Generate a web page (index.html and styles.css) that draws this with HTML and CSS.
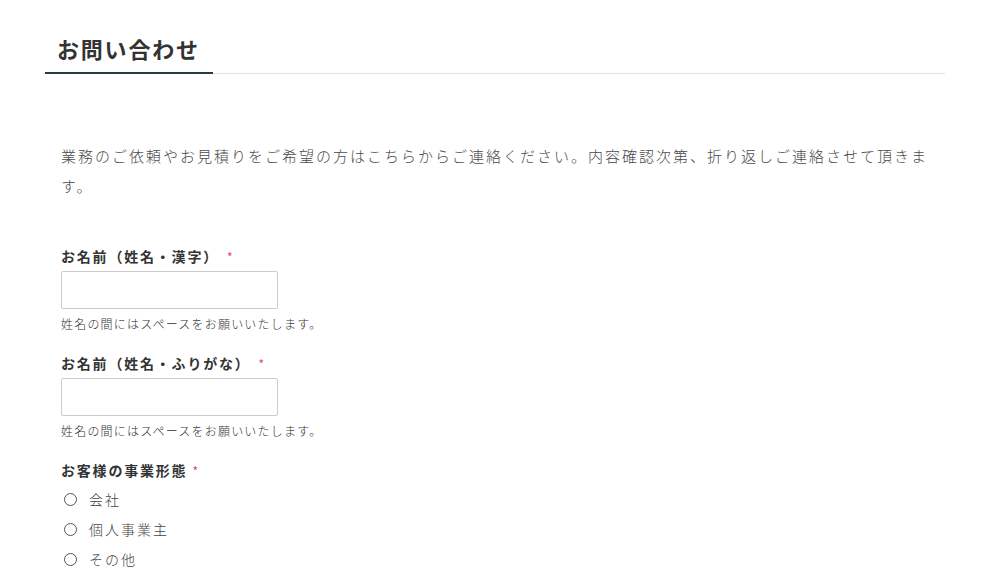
FILE: index.html
```html
<!DOCTYPE html>
<html lang="ja">
<head>
    <meta charset="utf-8">
    <meta name="viewport" content="width=device-width, initial-scale=1">
    <title>お問い合わせ</title>
    <link rel="stylesheet" href="styles.css">
</head>
<body>
<div class="page">
    <div class="page-head">
        <h2 class="page-title">お問い合わせ</h2>
    </div>
    <div class="content">
        <p class="lead">業務のご依頼やお見積りをご希望の方はこちらからご連絡ください。内容確認次第、折り返しご連絡させて頂きます。</p>
        <form class="form">
            <div class="field">
                <label class="field-label" for="name-kanji">お名前（姓名・漢字）<span class="req req-gap">*</span></label>
                <input class="text-input" id="name-kanji" type="text">
                <div class="help">姓名の間にはスペースをお願いいたします。</div>
            </div>
            <div class="field">
                <label class="field-label" for="name-kana">お名前（姓名・ふりがな）<span class="req req-gap">*</span></label>
                <input class="text-input" id="name-kana" type="text">
                <div class="help">姓名の間にはスペースをお願いいたします。</div>
            </div>
            <div class="field">
                <div class="field-label">お客様の事業形態 <span class="req">*</span></div>
                <label class="radio"><span class="radio-mark"></span>会社</label>
                <label class="radio"><span class="radio-mark"></span>個人事業主</label>
                <label class="radio"><span class="radio-mark"></span>その他</label>
            </div>
        </form>
    </div>
</div>
</body>
</html>
```

FILE: styles.css
```css
body {
    margin: 0;
    background: #ffffff;
    color: #555555;
    font-family: "Noto Sans CJK JP", "Noto Sans", sans-serif;
}

.page {
    width: 900px;
    margin-left: 45px;
    padding-top: 32px;
}

.page-head {
    border-bottom: 1px solid #e3e3e3;
}

.page-title {
    display: inline-block;
    margin: 0 0 -1px 0;
    padding: 0 12px 8px 12px;
    width: 144px;
    font-size: 22px;
    line-height: 32px;
    font-weight: bold;
    color: #333333;
    letter-spacing: 1.8px;
    white-space: nowrap;
    border-bottom: 2px solid #2b3a40;
}

.content {
    padding: 0 16px;
}

.lead {
    margin: 67px 0 0 0;
    font-size: 15px;
    line-height: 30px;
    letter-spacing: 2px;
    font-weight: 300;
    color: #4a4a4a;
}

.form {
    margin-top: 45px;
}

.field {
    display: flex;
    flex-direction: column;
    align-items: flex-start;
    margin-bottom: 20px;
}

.field-label {
    font-size: 14px;
    line-height: 20px;
    font-weight: bold;
    letter-spacing: 1.8px;
    color: #333333;
    margin-bottom: 6px;
}

.text-input + .help {
    margin-top: 6px;
}

.field-label + .text-input {
    margin-top: -2px;
}

.req {
    color: #e2475a;
    font-weight: normal;
    font-size: 12px;
}

.req-gap {
    margin-left: 8px;
}

.text-input {
    box-sizing: border-box;
    width: 217px;
    height: 38px;
    margin: 0;
    border: 1px solid #cccccc;
    border-radius: 2px;
    background: #ffffff;
}

.help {
    font-size: 12px;
    line-height: 18px;
    letter-spacing: 1.2px;
    font-weight: 300;
    color: #333333;
}

.radio {
    display: flex;
    align-items: center;
    height: 30px;
    font-size: 14px;
    letter-spacing: 2px;
    font-weight: 300;
    color: #444444;
}

.field-label + .radio {
    margin-top: -3px;
}

.radio-mark {
    box-sizing: border-box;
    width: 13px;
    height: 13px;
    border: 1px solid #555555;
    border-radius: 50%;
    margin: 0 12px 0 3px;
}
```
